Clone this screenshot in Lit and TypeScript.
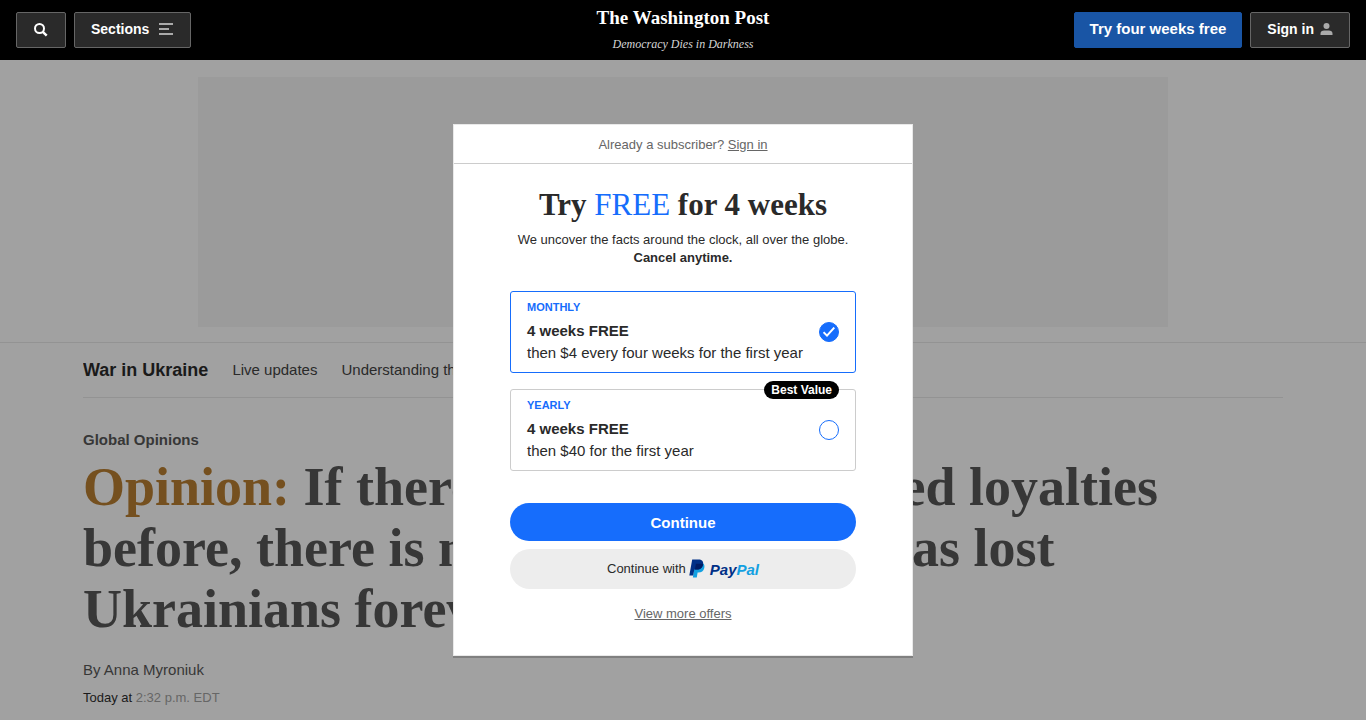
import { LitElement, html, css } from "lit";
import { customElement, state } from "lit/decorators.js";

interface Plan {
  id: string;
  term: string;
  offer: string;
  detail: string;
  badge?: string;
}

const PLANS: Plan[] = [
  { id: "monthly", term: "MONTHLY", offer: "4 weeks FREE", detail: "then $4 every four weeks for the first year" },
  { id: "yearly", term: "YEARLY", offer: "4 weeks FREE", detail: "then $40 for the first year", badge: "Best Value" },
];

@customElement("site-header")
export class SiteHeader extends LitElement {
  static styles = css`
    :host {
      display: block;
      background: #000;
      color: #fff;
    }
    .bar {
      display: grid;
      grid-template-columns: 1fr auto 1fr;
      align-items: center;
      height: 60px;
      padding: 0 16px;
    }
    .group {
      display: flex;
      gap: 8px;
    }
    .end {
      justify-content: flex-end;
    }
    .btn {
      display: flex;
      align-items: center;
      gap: 6px;
      box-sizing: border-box;
      height: 36px;
      padding: 0 16px 2px;
      border: 1px solid #666;
      border-radius: 2px;
      background: #2a2a2a;
      color: #fff;
      font: 700 14px "Liberation Sans", Arial, sans-serif;
      white-space: nowrap;
      cursor: pointer;
    }
    .search {
      padding: 0 17px;
    }
    .menu {
      gap: 9px;
    }
    .primary {
      padding: 0 15px 3px;
      border-color: #1955a5;
      background: #1955a5;
      font-size: 15px;
    }
    .icon {
      display: block;
    }
    .brand {
      display: flex;
      flex-direction: column;
      align-items: center;
      gap: 6px;
      padding-bottom: 2px;
      color: inherit;
      text-decoration: none;
    }
    .name {
      font: 700 19px/24px "Liberation Serif", "Times New Roman", serif;
    }
    .motto {
      color: #d5d5d5;
      font: italic 12px/16px "Liberation Serif", "Times New Roman", serif;
    }
  `;

  render() {
    return html`
      <header class="bar">
        <div class="group">
          <button class="btn search" type="button" aria-label="Search">
            <svg width="14" height="14" viewBox="0 0 14 14" fill="none" stroke="#fff" stroke-width="2">
              <circle cx="5.500" cy="5.500" r="4.500" />
              <path d="M8.800 8.800 12.700 12.700" stroke-width="2.400" />
            </svg>
          </button>
          <button class="btn menu" type="button">
            Sections
            <svg class="icon" width="16" height="12" viewBox="0 0 16 12" fill="#aaa">
              <path d="M1 0h14v2H1zM1 5h10v2H1zM1 10h14v2H1z" />
            </svg>
          </button>
        </div>
        <a class="brand" href="#">
          <span class="name">The Washington Post</span>
          <span class="motto">Democracy Dies in Darkness</span>
        </a>
        <div class="group end">
          <button class="btn primary" type="button">Try four weeks free</button>
          <button class="btn" type="button">
            Sign in
            <svg class="icon" width="13" height="12" viewBox="0 0 13 12" fill="#aaa">
              <circle cx="6.500" cy="3" r="3" />
              <path d="M.5 12v-1.200C.5 8.800 2 7.600 4.200 7.600h4.600c2.200 0 3.700 1.200 3.700 3.200V12z" />
            </svg>
          </button>
        </div>
      </header>
    `;
  }
}

@customElement("article-page")
export class ArticlePage extends LitElement {
  static styles = css`
    :host {
      display: block;
      color: #373737;
      font: 15px/20px "Liberation Sans", Arial, sans-serif;
    }
    .ad {
      max-width: 970px;
      height: 250px;
      margin: 17px auto 15px;
      background: #9b9b9b;
    }
    .topics {
      border-top: 1px solid #939393;
    }
    .wrap {
      max-width: 1200px;
      margin: 0 auto;
    }
    .links {
      display: flex;
      align-items: center;
      gap: 24px;
      height: 54px;
      border-bottom: 1px solid #939393;
      white-space: nowrap;
      overflow: hidden;
    }
    .links a {
      color: #2a2a2a;
      text-decoration: none;
    }
    .links .lead {
      color: #1a1a1a;
      font-size: 18px;
      font-weight: 700;
    }
    .kicker {
      margin: 32px 0 7px;
      font-weight: 700;
    }
    .headline {
      margin: 0 0 20px;
      font: 700 54px/61px "Liberation Serif", "Times New Roman", serif;
    }
    .label {
      color: #75501f;
    }
    .byline {
      margin: 0 0 8px;
    }
    .date {
      margin: 0;
      color: #1a1a1a;
      font-size: 13px;
    }
    .time {
      color: #666;
    }
  `;

  render() {
    return html`
      <div class="ad"></div>
      <nav class="topics" aria-label="Topics">
        <div class="wrap links">
          <a class="lead" href="#">War in Ukraine</a>
          <a href="#">Live updates</a>
          <a href="#">Understanding the conflict</a>
        </div>
      </nav>
      <article class="wrap">
        <p class="kicker">Global Opinions</p>
        <h1 class="headline">
          <span class="label">Opinion:</span> If there were quietly divided loyalties before, there is none today. Russia has lost Ukrainians forever
        </h1>
        <p class="byline">By Anna Myroniuk</p>
        <p class="date">Today at <span class="time">2:32 p.m. EDT</span></p>
      </article>
    `;
  }
}

@customElement("offer-dialog")
export class OfferDialog extends LitElement {
  @state() private selected = "monthly";

  static styles = css`
    :host {
      display: block;
      width: 100%;
      max-width: 460px;
      color: #2a2a2a;
      font: 13px/18px "Liberation Sans", Arial, sans-serif;
    }
    .panel {
      box-sizing: border-box;
      border: 1px solid #e9e9e9;
      background: #fff;
      box-shadow: 0 2px 0 #808080;
      text-align: center;
    }
    .signin {
      padding: 11px 0 9px;
      border-bottom: 1px solid #ccc;
      color: #666;
    }
    .link {
      color: #666;
    }
    .body {
      padding: 23px 56px 32px;
    }
    .title {
      margin: 0 0 8px;
      font: 700 31px/36px "Liberation Serif", "Times New Roman", serif;
    }
    .free {
      color: #166dfc;
      font-weight: 400;
    }
    .copy {
      margin: 0 0 24px;
    }
    .plans {
      display: grid;
      gap: 16px;
      margin: 0 0 32px;
    }
    .plan {
      position: relative;
      display: flex;
      align-items: center;
      justify-content: space-between;
      padding: 7px 16px 8px;
      border: 1px solid #ccc;
      border-radius: 3px;
      text-align: left;
      font-size: 15px;
      line-height: 22px;
      cursor: pointer;
    }
    .active {
      border-color: #166dfc;
    }
    .details {
      display: grid;
    }
    .term {
      margin-bottom: 5px;
      color: #166dfc;
      font-size: 11px;
      font-weight: 700;
      line-height: 16px;
    }
    .offer {
      font-weight: 700;
    }
    .badge {
      position: absolute;
      top: -9px;
      right: 16px;
      padding: 1px 7px 0;
      border-radius: 9px;
      background: #000;
      color: #fff;
      font-size: 12px;
      font-weight: 700;
      line-height: 17px;
    }
    .choice {
      display: grid;
      place-items: center;
    }
    .radio,
    .tick {
      grid-area: 1 / 1;
    }
    .radio {
      appearance: none;
      box-sizing: border-box;
      width: 20px;
      height: 20px;
      margin: 0;
      border: 1px solid #166dfc;
      border-radius: 50%;
      background: #fff;
    }
    .radio:checked {
      background: #166dfc;
    }
    .tick {
      pointer-events: none;
    }
    .actions {
      display: grid;
      gap: 8px;
      margin-bottom: 16px;
    }
    .go,
    .paypal {
      border: 0;
      border-radius: 20px;
      font-family: inherit;
      cursor: pointer;
    }
    .go {
      height: 38px;
      background: #166dfc;
      color: #fff;
      font-size: 15px;
      font-weight: 700;
    }
    .paypal {
      display: flex;
      align-items: center;
      justify-content: center;
      height: 40px;
      padding: 0 0 2px;
      background: #ededed;
      color: #2a2a2a;
      font-size: 13px;
    }
    .mark {
      margin: 0 5px 0 3px;
    }
    .word {
      padding-top: 3px;
      color: #003087;
      font-size: 15px;
      font-style: italic;
      font-weight: 700;
    }
    .pal {
      color: #12a0e1;
    }
  `;

  private renderPlan(plan: Plan) {
    const on = this.selected === plan.id;
    return html`
      <label class="plan ${on ? "active" : ""}" for=${plan.id}>
        <span class="details">
          <span class="term">${plan.term}</span>
          <span class="offer">${plan.offer}</span>
          <span>${plan.detail}</span>
        </span>
        <span class="choice">
          <input class="radio" type="radio" name="plan" id=${plan.id} .checked=${on} @change=${() => (this.selected = plan.id)} />
          ${on
            ? html`<svg class="tick" width="12" height="10" viewBox="0 0 12 10" fill="none" stroke="#fff" stroke-width="2">
                <path d="M.5 5.200 4 8.600 11.300.6" />
              </svg>`
            : ""}
        </span>
        ${plan.badge ? html`<span class="badge">${plan.badge}</span>` : ""}
      </label>
    `;
  }

  render() {
    return html`
      <section class="panel" role="dialog" aria-labelledby="title">
        <div class="signin">Already a subscriber? <a class="link" href="#">Sign in</a></div>
        <div class="body">
          <h2 class="title" id="title">Try <span class="free">FREE</span> for 4 weeks</h2>
          <p class="copy">We uncover the facts around the clock, all over the globe.<br /><strong>Cancel anytime.</strong></p>
          <div class="plans" role="radiogroup" aria-label="Plans">${PLANS.map((p) => this.renderPlan(p))}</div>
          <div class="actions">
            <button class="go" type="button">Continue</button>
            <button class="paypal" type="button">
              Continue with
              <svg class="mark" width="16" height="19" viewBox="0 0 16 19">
                <path fill="#12a0e1" d="M14.200 4.600c1.200 1 1.500 2.500 1.100 4.300-.7 3.200-2.900 4.500-5.900 4.500h-.8l-.8 5H3.900L6 4.600z" />
                <path fill="#003087" d="M3.200.5h6.200c3.400 0 5.300 1.600 4.700 4.900-.7 3.700-3.200 5.200-6.500 5.200H5.300L4.200 16.500H.3z" />
                <path fill="#001c64" d="M6.900 4.700h5.600c.6 0 1.100.1 1.600.3-.6 4-3.100 5.600-6.500 5.600H5.900z" />
              </svg>
              <span class="word">Pay<span class="pal">Pal</span></span>
            </button>
          </div>
          <a class="link" href="#">View more offers</a>
        </div>
      </section>
    `;
  }
}

@customElement("app-root")
export class AppRoot extends LitElement {
  static styles = css`
    :host {
      display: flex;
      flex-direction: column;
      position: relative;
      height: 100vh;
      overflow: hidden;
      background: #a1a1a1;
    }
    .header,
    .page {
      flex: none;
    }
    .overlay {
      position: absolute;
      inset: 60px 0 0;
      display: flex;
      align-items: center;
      justify-content: center;
    }
  `;

  render() {
    return html`
      <site-header class="header"></site-header>
      <article-page class="page"></article-page>
      <div class="overlay"><offer-dialog></offer-dialog></div>
    `;
  }
}
